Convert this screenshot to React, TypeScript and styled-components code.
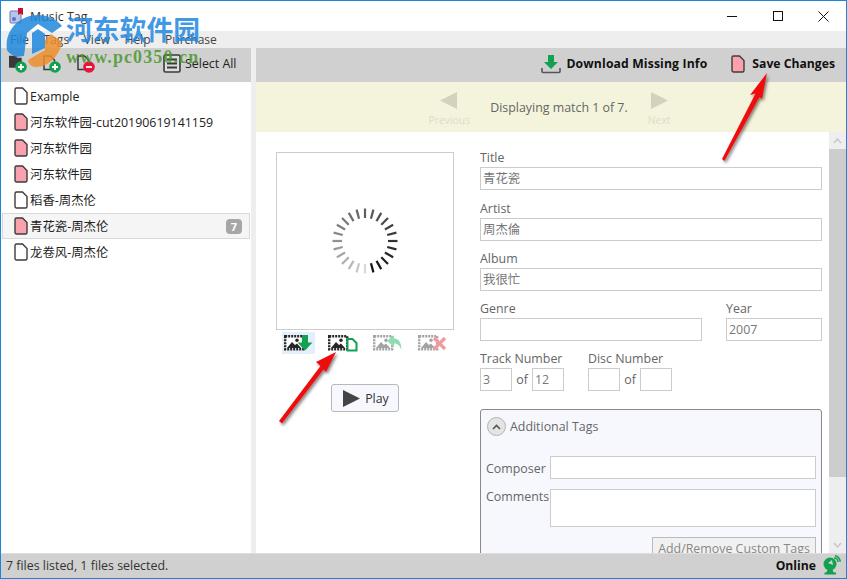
import React from "react";
import styled, { createGlobalStyle } from "styled-components";

const FONT = `"Open Sans", "Noto Sans CJK SC", sans-serif`;

const Global = createGlobalStyle`
  html, body { margin: 0; padding: 0; background: #fff; }
  * { box-sizing: border-box; }
`;

const Window = styled.div`
  position: relative;
  width: 847px;
  height: 579px;
  border: 1px solid #1a86d9;
  display: flex;
  flex-direction: column;
  overflow: hidden;
  font-family: ${FONT};
  font-size: 12.4px;
  color: #222;
  background: #fff;
`;

const TitleBar = styled.div`
  height: 30px;
  flex: none;
  display: flex;
  align-items: center;
  padding-left: 8px;
  gap: 5px;
  background: #fff;
`;
const TitleText = styled.div`
  font-size: 12.4px;
  color: #333;
  flex: 1;
  padding-top: 1px;
`;
const WinButton = styled.div`
  width: 45.5px;
  height: 30px;
  display: flex;
  align-items: center;
  justify-content: center;
`;
const WinControls = styled.div`
  display: flex;
`;

const MenuBar = styled.div`
  height: 17px;
  flex: none;
  background: #eeeeee;
  display: flex;
  align-items: center;
  padding-left: 9px;
  gap: 14.6px;
  font-size: 12px;
  color: #444;
`;

const ToolRow = styled.div`
  height: 34px;
  flex: none;
  display: flex;
`;
const ToolLeft = styled.div`
  width: 250px;
  background: #d0d0d0;
  display: flex;
  align-items: center;
  padding: 0 0 3px 8px;
`;
const Splitter = styled.div`
  width: 5px;
  flex: none;
  background: #eeeeee;
`;
const ToolRight = styled.div`
  flex: 1;
  background: #d0d0d0;
  display: flex;
  align-items: center;
  justify-content: flex-end;
  padding: 0 11px 3px 0;
`;
const ToolIcon = styled.div<{ $gap: number }>`
  display: flex;
  margin-right: ${(p) => p.$gap}px;
`;
const SelectAll = styled.div`
  color: #222;
`;
const ActionButton = styled.div<{ $space: number; $gap: number; $track?: number }>`
  display: flex;
  align-items: center;
  gap: ${(p) => p.$gap}px;
  font-weight: 700;
  font-size: 12.2px;
  letter-spacing: ${(p) => p.$track ?? 0}px;
  color: #111;
  margin-left: ${(p) => p.$space}px;
`;

const Body = styled.div`
  flex: 1;
  display: flex;
  min-height: 0;
`;
const Sidebar = styled.div`
  width: 250px;
  flex: none;
  padding-top: 1px;
  background: #fff;
`;
const Row = styled.div<{ $selected?: boolean }>`
  height: 26px;
  margin: 0 1px;
  padding-left: 11px;
  padding-right: 7px;
  display: flex;
  align-items: center;
  gap: 2px;
  color: #222;
  background: ${(p) => (p.$selected ? "#f5f5f5" : "transparent")};
  border: 1px solid ${(p) => (p.$selected ? "#d9d9d9" : "transparent")};
`;
const RowText = styled.div`
  flex: 1;
  white-space: nowrap;
`;
const Badge = styled.div`
  width: 16px;
  height: 15px;
  border-radius: 4px;
  background: #a6a6a6;
  color: #fff;
  font-size: 11px;
  font-weight: 700;
  display: flex;
  align-items: center;
  justify-content: center;
`;

const Main = styled.div`
  flex: 1;
  min-width: 0;
  display: flex;
  flex-direction: column;
`;
const MatchBar = styled.div`
  height: 50px;
  flex: none;
  background: #f4f4dc;
  display: flex;
  justify-content: center;
  gap: 20px;
  padding-right: 3px;
`;
const NavItem = styled.div`
  display: flex;
  flex-direction: column;
  align-items: center;
  padding-top: 10px;
  color: #dcdcc8;
  font-size: 10.4px;
  line-height: 13px;
  gap: 5px;
`;
const MatchText = styled.div`
  align-self: center;
  color: #666;
  font-size: 12.4px;
`;
const Scroller = styled.div`
  flex: 1;
  min-height: 0;
  display: flex;
`;
const Content = styled.div`
  flex: 1;
  min-width: 0;
  overflow: hidden;
  display: flex;
  padding: 18px 0 0 20px;
  gap: 26px;
`;
const ScrollTrack = styled.div`
  width: 17px;
  flex: none;
  background: #eeeeee;
  display: flex;
  flex-direction: column;
`;
const ScrollArrow = styled.div`
  height: 17px;
  flex: none;
  display: flex;
  align-items: center;
  justify-content: center;
`;
const ScrollThumb = styled.div`
  height: 328px;
  flex: none;
  background: #cdcdcd;
`;
const ScrollRest = styled.div`
  flex: 1;
`;

const ArtColumn = styled.div`
  width: 178px;
  flex: none;
  display: flex;
  flex-direction: column;
  padding-top: 2px;
`;
const ArtBox = styled.div`
  width: 178px;
  height: 178px;
  border: 1px solid #cccccc;
  display: flex;
  align-items: center;
  justify-content: center;
`;
const ArtTools = styled.div`
  display: flex;
  gap: 11.7px;
  padding-left: 6px;
  margin-top: 2px;
`;
const ArtTool = styled.div<{ $active?: boolean }>`
  width: 33px;
  height: 22px;
  display: flex;
  align-items: center;
  justify-content: center;
  background: ${(p) => (p.$active ? "#e3effa" : "transparent")};
`;
const PlayButton = styled.div`
  align-self: flex-start;
  margin: 30px 0 0 55px;
  width: 68px;
  height: 28px;
  border: 1px solid #b8b8b8;
  border-radius: 3px;
  background: #f7f8fe;
  display: flex;
  align-items: center;
  justify-content: center;
  gap: 5px;
  padding-left: 2px;
  color: #333;
`;

const Form = styled.div`
  width: 342px;
  flex: none;
`;
const Field = styled.div<{ $mb?: number }>`
  margin-bottom: ${(p) => p.$mb ?? 10}px;
`;
const Label = styled.div`
  height: 17px;
  line-height: 15px;
  color: #666;
  white-space: nowrap;
`;
const Input = styled.div<{ $w?: number; $h?: number }>`
  width: ${(p) => (p.$w ? `${p.$w}px` : "100%")};
  height: ${(p) => p.$h ?? 23}px;
  border: 1px solid #cccccc;
  color: #777;
  padding-left: 2px;
  line-height: 22px;
  background: #fff;
  flex: none;
`;
const TwoCols = styled.div`
  display: flex;
  gap: 24px;
  margin-bottom: 10px;
`;
const NumberRow = styled.div`
  display: flex;
  gap: 24px;
`;
const NumberPair = styled.div`
  display: flex;
  align-items: center;
  height: 23px;
  color: #666;
`;
const Of = styled.div`
  width: 20px;
  text-align: center;
`;
const Panel = styled.div`
  margin-top: 18px;
  background: #f7f8fe;
  border: 1px solid #888;
  border-radius: 3px;
  padding: 7px 5px 0 5px;
  height: 170px;
`;
const PanelHead = styled.div`
  display: flex;
  align-items: center;
  gap: 4px;
  color: #666;
  font-size: 12.4px;
  margin-left: 1px;
`;
const Toggle = styled.div`
  width: 19px;
  height: 19px;
  border-radius: 50%;
  border: 1px solid #b4b4b4;
  background: #e4e4e4;
  display: flex;
  align-items: center;
  justify-content: center;
`;
const PanelRow = styled.div<{ $mt: number }>`
  display: flex;
  margin-top: ${(p) => p.$mt}px;
`;
const PanelLabel = styled.div<{ $lh: number }>`
  width: 64px;
  height: 23px;
  flex: none;
  color: #666;
  line-height: ${(p) => p.$lh}px;
  white-space: nowrap;
`;
const CustomButton = styled.div`
  margin: 10px 0 0 166px;
  width: 164px;
  height: 30px;
  border: 1px solid #bbbbbb;
  background: #f1f1f1;
  color: #888;
  text-align: center;
  line-height: 22px;
  white-space: nowrap;
`;

const Status = styled.div`
  height: 25px;
  flex: none;
  background: #d0d0d0;
  display: flex;
  align-items: center;
  justify-content: space-between;
  padding: 0 5px 2px 5px;
  border-top: 1px solid #dddddd;
  color: #333;
`;
const Online = styled.div`
  display: flex;
  align-items: center;
  gap: 6px;
  font-weight: 700;
  font-size: 12.2px;
  color: #111;
`;

const Overlay = styled.svg`
  position: absolute;
  left: -1px;
  top: -1px;
  pointer-events: none;
`;
const WaterName = styled.div`
  position: absolute;
  left: 65px;
  top: 9px;
  font-family: "Noto Sans CJK SC", sans-serif;
  font-weight: 700;
  font-size: 26.8px;
  line-height: 38px;
  color: rgba(30, 135, 225, 0.85);
  white-space: nowrap;
`;
const WaterUrl = styled.div`
  position: absolute;
  left: 65px;
  top: 46px;
  font-family: "Liberation Serif", serif;
  font-weight: 700;
  font-size: 18px;
  line-height: 20px;
  letter-spacing: 1.1px;
  color: rgba(70, 150, 40, 0.82);
  white-space: nowrap;
`;

const FileIcon = ({ pink }: { pink?: boolean }) => (
  <svg width="14" height="18" viewBox="0 0 14 18">
    <path
      d="M2.5 1H8.5L13 5.5V15.5A1.5 1.5 0 0 1 11.5 17H2.5A1.5 1.5 0 0 1 1 15.5V2.5A1.5 1.5 0 0 1 2.5 1Z"
      fill={pink ? "#f9a2ae" : "#fff"}
      stroke="#3c3c3c"
      strokeWidth="1.4"
    />
  </svg>
);

const Badged = ({ kind, folder }: { kind: "add" | "remove"; folder?: boolean }) => (
  <svg width="18" height="18" viewBox="0 0 18 18">
    {folder ? (
      <path d="M0.7 1.5H6L8 3.5H12V12H0.7Z" fill="#3a3a3a" stroke="#3a3a3a" strokeWidth="1.4" />
    ) : (
      <path d="M1 1H7.5L11.5 5V14.5H1Z" fill="none" stroke="#3a3a3a" strokeWidth="1.5" />
    )}
    <circle cx="12" cy="12" r="5.8" fill={kind === "add" ? "#12a150" : "#e8143c"} />
    <path d={kind === "add" ? "M12 9V15M9 12H15" : "M9 12H15"} stroke="#fff" strokeWidth="1.8" />
  </svg>
);

const ListIcon = () => (
  <svg width="18" height="19" viewBox="0 0 18 19">
    <rect x="1" y="1" width="16" height="17" rx="1.5" fill="#ddd" stroke="#3a3a3a" strokeWidth="1.6" />
    <path d="M4 5.5H14M4 9.5H14M4 13.5H14" stroke="#3a3a3a" strokeWidth="1.8" />
  </svg>
);

const DownloadIcon = () => (
  <svg width="20" height="20" viewBox="0 0 20 20">
    <path d="M7 1H13V8H17L10 15L3 8H7Z" fill="#12a150" />
    <path d="M1 14V17.5A1 1 0 0 0 2 18.5H18A1 1 0 0 0 19 17.5V14" fill="none" stroke="#555" strokeWidth="1.6" />
  </svg>
);

const Picture = ({ dim }: { dim?: boolean }) => (
  <g opacity={dim ? 0.42 : 1}>
    <rect x="1.2" y="2.2" width="18" height="13" fill="#fff" stroke="#262626" strokeWidth="2.4" strokeDasharray="2 1" />
    <path d="M3 14L8 8L11 11L13 9.5L17 14Z" fill="#262626" />
    <circle cx="13" cy="6.2" r="1.7" fill="#262626" />
  </g>
);

const PicDownload = () => (
  <svg width="30" height="18" viewBox="0 0 30 18">
    <Picture />
    <path d="M18 1H24V8.5H28.5L21 16.5L13.5 8.5H18Z" fill="#12a150" />
  </svg>
);
const PicFile = () => (
  <svg width="30" height="18" viewBox="0 0 30 18">
    <Picture />
    <path d="M19.5 5H24.5L28.5 9V16.5H19.5Z" fill="#fff" stroke="#12a150" strokeWidth="2" />
  </svg>
);
const PicUndo = () => (
  <svg width="30" height="18" viewBox="0 0 30 18">
    <Picture dim />
    <path d="M14 7L21 1V4.5C26 4.5 28.5 9 28.5 16C27 12 25 9.5 21 9.5V13Z" fill="#8fdcb4" />
  </svg>
);
const PicRemove = () => (
  <svg width="30" height="18" viewBox="0 0 30 18">
    <Picture dim />
    <path d="M16 4L27 15M27 4L16 15" stroke="#f19aa2" strokeWidth="3.2" />
  </svg>
);

const Spinner = () => {
  const ticks = Array.from({ length: 24 }, (_, i) => i);
  return (
    <svg width="70" height="70" viewBox="-35 -35 70 70">
      {ticks.map((i) => {
        const steps = (i + 12) % 24;
        const v = 0.16 + Math.pow(steps / 23, 0.75) * 0.84;
        return (
          <line
            key={i}
            x1="0"
            y1="-23"
            x2="0"
            y2="-32.5"
            stroke="#111"
            strokeOpacity={v}
            strokeWidth="2.2"
            transform={`rotate(${i * 15})`}
          />
        );
      })}
    </svg>
  );
};

const files: { name: string; pink?: boolean; selected?: boolean; count?: number }[] = [
  { name: "Example" },
  { name: "河东软件园-cut20190619141159", pink: true },
  { name: "河东软件园", pink: true },
  { name: "河东软件园", pink: true },
  { name: "稻香-周杰伦" },
  { name: "青花瓷-周杰伦", pink: true, selected: true, count: 7 },
  { name: "龙卷风-周杰伦" },
];

export default function App() {
  return (
    <>
      <Global />
      <Window>
        <TitleBar>
          <svg width="16" height="18" viewBox="0 0 16 18">
            <rect x="1" y="4" width="11" height="12" rx="1" fill="#b9c4ea" stroke="#6b78b8" />
            <circle cx="5" cy="12" r="2" fill="#5f6fc0" />
            <path d="M9 1H14V8L11.5 6.5L9 8Z" fill="#c8102e" />
          </svg>
          <TitleText>Music Tag</TitleText>
          <WinControls>
            <WinButton>
              <svg width="10" height="10" viewBox="0 0 10 10">
                <path d="M0 5.5H10" stroke="#111" />
              </svg>
            </WinButton>
            <WinButton>
              <svg width="10" height="10" viewBox="0 0 10 10">
                <rect x="0.5" y="0.5" width="9" height="9" fill="none" stroke="#111" />
              </svg>
            </WinButton>
            <WinButton>
              <svg width="11" height="11" viewBox="0 0 11 11">
                <path d="M0.5 0.5L10.5 10.5M10.5 0.5L0.5 10.5" stroke="#111" />
              </svg>
            </WinButton>
          </WinControls>
        </TitleBar>
        <MenuBar>
          <span>File</span>
          <span>Tags</span>
          <span>View</span>
          <span>Help</span>
          <span>Purchase</span>
        </MenuBar>
        <ToolRow>
          <ToolLeft>
            <ToolIcon $gap={16}>
              <Badged kind="add" folder />
            </ToolIcon>
            <ToolIcon $gap={16}>
              <Badged kind="add" />
            </ToolIcon>
            <ToolIcon $gap={68}>
              <Badged kind="remove" />
            </ToolIcon>
            <ToolIcon $gap={4}>
              <ListIcon />
            </ToolIcon>
            <SelectAll>Select All</SelectAll>
          </ToolLeft>
          <Splitter />
          <ToolRight>
            <ActionButton $space={0} $gap={5} $track={0.14}>
              <DownloadIcon />
              Download Missing Info
            </ActionButton>
            <ActionButton $space={24} $gap={7}>
              <FileIcon pink />
              Save Changes
            </ActionButton>
          </ToolRight>
        </ToolRow>
        <Body>
          <Sidebar>
            {files.map((f, i) => (
              <Row key={i} $selected={f.selected}>
                <FileIcon pink={f.pink} />
                <RowText>{f.name}</RowText>
                {f.count ? <Badge>{f.count}</Badge> : null}
              </Row>
            ))}
          </Sidebar>
          <Splitter />
          <Main>
            <MatchBar>
              <NavItem>
                <svg width="18" height="17" viewBox="0 0 18 17">
                  <path d="M17 0V17L0 8.5Z" fill="#d2d2bf" />
                </svg>
                Previous
              </NavItem>
              <MatchText>Displaying match 1 of 7.</MatchText>
              <NavItem>
                <svg width="18" height="17" viewBox="0 0 18 17">
                  <path d="M1 0V17L18 8.5Z" fill="#d2d2bf" />
                </svg>
                Next
              </NavItem>
            </MatchBar>
            <Scroller>
              <Content>
                <ArtColumn>
                  <ArtBox>
                    <Spinner />
                  </ArtBox>
                  <ArtTools>
                    <ArtTool $active>
                      <PicDownload />
                    </ArtTool>
                    <ArtTool>
                      <PicFile />
                    </ArtTool>
                    <ArtTool>
                      <PicUndo />
                    </ArtTool>
                    <ArtTool>
                      <PicRemove />
                    </ArtTool>
                  </ArtTools>
                  <PlayButton>
                    <svg width="17" height="17" viewBox="0 0 17 17">
                      <path d="M0 0V17L17 8.5Z" fill="#444" />
                    </svg>
                    Play
                  </PlayButton>
                </ArtColumn>
                <Form>
                  <Field $mb={11}>
                    <Label>Title</Label>
                    <Input>青花瓷</Input>
                  </Field>
                  <Field>
                    <Label>Artist</Label>
                    <Input>周杰倫</Input>
                  </Field>
                  <Field>
                    <Label>Album</Label>
                    <Input>我很忙</Input>
                  </Field>
                  <TwoCols>
                    <div>
                      <Label>Genre</Label>
                      <Input $w={222} />
                    </div>
                    <div>
                      <Label>Year</Label>
                      <Input $w={96}>2007</Input>
                    </div>
                  </TwoCols>
                  <NumberRow>
                    <div>
                      <Label>Track Number</Label>
                      <NumberPair>
                        <Input $w={32}>3</Input>
                        <Of>of</Of>
                        <Input $w={32}>12</Input>
                      </NumberPair>
                    </div>
                    <div>
                      <Label>Disc Number</Label>
                      <NumberPair>
                        <Input $w={32} />
                        <Of>of</Of>
                        <Input $w={32} />
                      </NumberPair>
                    </div>
                  </NumberRow>
                  <Panel>
                    <PanelHead>
                      <Toggle>
                        <svg width="9" height="6" viewBox="0 0 9 6">
                          <path d="M1 5L4.5 1.5L8 5" fill="none" stroke="#555" strokeWidth="1.6" />
                        </svg>
                      </Toggle>
                      Additional Tags
                    </PanelHead>
                    <PanelRow $mt={20}>
                      <PanelLabel $lh={25}>Composer</PanelLabel>
                      <Input $w={266} />
                    </PanelRow>
                    <PanelRow $mt={10}>
                      <PanelLabel $lh={15}>Comments</PanelLabel>
                      <Input $w={266} $h={38} />
                    </PanelRow>
                    <CustomButton>Add/Remove Custom Tags</CustomButton>
                  </Panel>
                </Form>
              </Content>
              <ScrollTrack>
                <ScrollArrow>
                  <svg width="9" height="6" viewBox="0 0 9 6">
                    <path d="M1 5L4.5 1L8 5" fill="none" stroke="#c4c4c4" strokeWidth="1.2" />
                  </svg>
                </ScrollArrow>
                <ScrollThumb />
                <ScrollRest />
                <ScrollArrow>
                  <svg width="9" height="6" viewBox="0 0 9 6">
                    <path d="M1 1L4.5 5L8 1" fill="none" stroke="#c4c4c4" strokeWidth="1.2" />
                  </svg>
                </ScrollArrow>
              </ScrollTrack>
            </Scroller>
          </Main>
        </Body>
        <Status>
          <span>7 files listed, 1 files selected.</span>
          <Online>
            Online
            <svg width="19" height="20" viewBox="0 0 19 20">
              <circle cx="8" cy="9" r="6.5" fill="#12a150" />
              <path d="M6 8L10 5L11 10Z" fill="#d0d0d0" />
              <path d="M6 14L4 18H12L10 14Z" fill="#12a150" />
              <path d="M2.5 18.5H14" stroke="#12a150" strokeWidth="2" />
              <path d="M12 3A4 4 0 0 1 16 7M13 0.8A7 7 0 0 1 18.3 6.5" fill="none" stroke="#12a150" strokeWidth="1.6" />
            </svg>
          </Online>
        </Status>

        <Overlay width="847" height="579" viewBox="0 0 847 579">
          <defs>
            <filter id="arrowShadow" x="-30%" y="-30%" width="160%" height="160%">
              <feDropShadow dx="1.5" dy="2" stdDeviation="1.4" floodColor="#000" floodOpacity="0.5" />
            </filter>
          </defs>
          <g opacity="0.85">
            <path
              d="M7 50C4 30 20 15 38 15C48 15 56 19 62 26L52 33L38 24L27 33L24 56L16 57C11 55 8 52 7 50Z"
              fill="#1f88dc"
            />
            <path d="M32 33L38 29L45 34V48L32 54Z" fill="#1f88dc" />
            <path d="M28 60L45 50V40L51 34L62 42C60 54 50 67 36 67C32 67 29 65 28 60Z" fill="#ef8f2c" />
          </g>
          <g filter="url(#arrowShadow)" fill="#ee1111">
            <path d="M767 73L750 95L755.5 93.5L722 159L724.5 161L759.5 97L762 99Z" />
            <path d="M336 352L316 362L320.5 366L279 421L282 423.5L323.5 369.5L326 372Z" />
          </g>
        </Overlay>
        <WaterName>河东软件园</WaterName>
        <WaterUrl>www.pc0350.cn</WaterUrl>
      </Window>
    </>
  );
}
